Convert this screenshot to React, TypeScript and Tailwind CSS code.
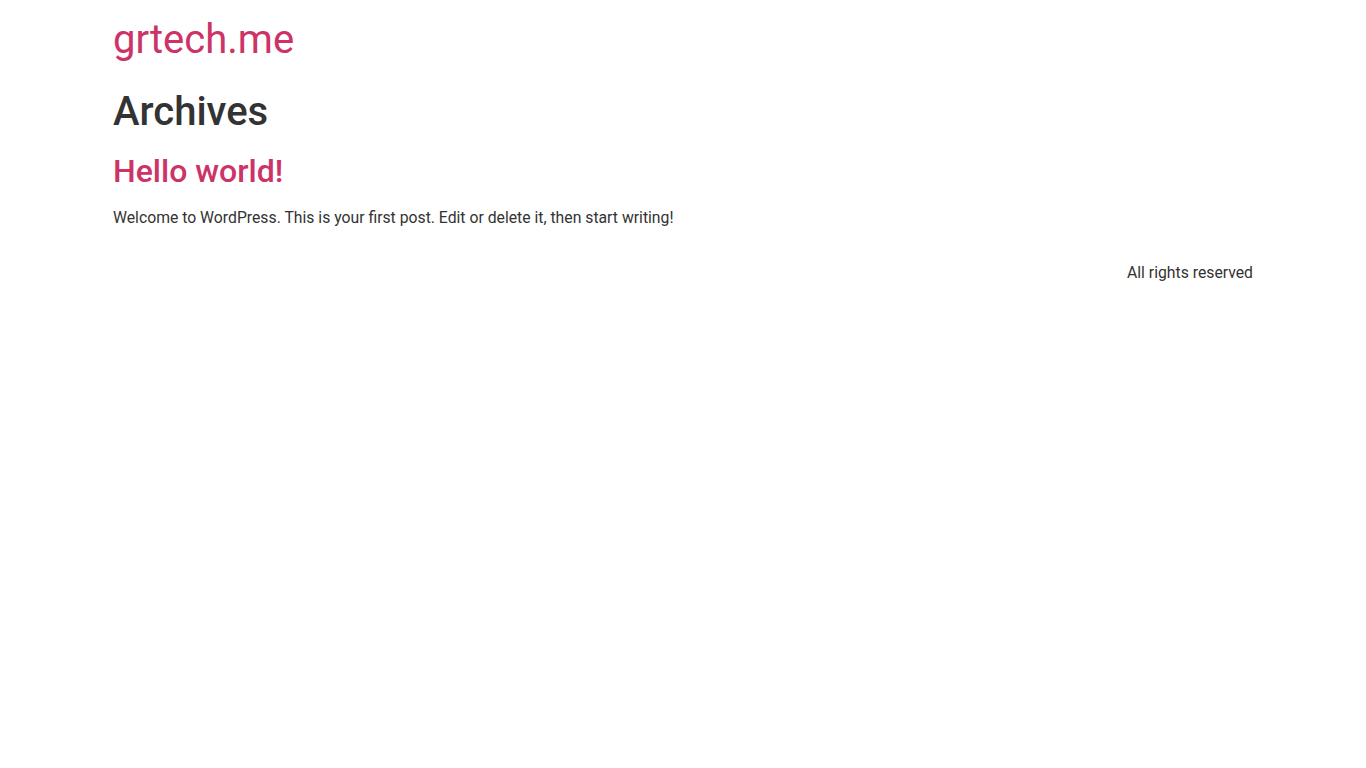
export default function App() {
  return (
    <div className="min-h-screen bg-white text-[#333333] font-['Roboto',sans-serif]">
      <header className="mx-auto w-[1140px] py-4">
        <div className="text-[40px] leading-[48px] text-[#cc3366]">grtech.me</div>
      </header>

      <main className="mx-auto w-[1140px]">
        <h1 className="mt-2 mb-4 text-[40px] font-medium leading-[48px]">Archives</h1>
        <article>
          <h2 className="mb-4 text-[32px] font-medium leading-[38.4px] text-[#cc3366]">
            Hello world!
          </h2>
          <p className="mb-[14.4px] text-[15.75px] leading-6">
            Welcome to WordPress. This is your first post. Edit or delete it, then start writing!
          </p>
        </article>
      </main>

      <footer className="mx-auto flex w-[1140px] justify-end py-4">
        <p className="text-[15.75px] leading-6">All rights reserved</p>
      </footer>
    </div>
  )
}
